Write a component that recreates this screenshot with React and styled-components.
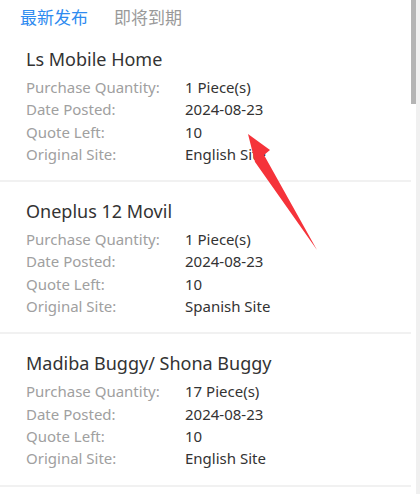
import styled, { createGlobalStyle } from 'styled-components';

const GlobalStyle = createGlobalStyle`
  html, body {
    margin: 0;
    padding: 0;
    background: #ffffff;
  }
  body {
    font-family: "Noto Sans", "Noto Sans CJK SC", sans-serif;
    overflow: hidden;
  }
`;

const Page = styled.div`
  width: 420px;
  height: 494px;
  overflow: hidden;
  background: #ffffff;
`;

const Tabs = styled.div`
  display: flex;
  gap: 26px;
  padding: 6px 20px 0;
  height: 24px;
`;

const Tab = styled.div`
  font-size: 17px;
  line-height: 24px;
  color: ${(p) => (p.active ? '#2e8bf0' : '#9a9a9a')};
`;

const List = styled.div`
  display: flex;
  flex-direction: column;
`;

const Card = styled.div`
  padding: 17px 26px 15px;
  border-bottom: 2px solid #f1f1f1;
`;

const Title = styled.div`
  font-size: 18px;
  line-height: 24px;
  color: #333333;
  margin-bottom: 5px;
`;

const Row = styled.div`
  display: grid;
  grid-template-columns: 159px 1fr;
  font-size: 15px;
  line-height: 22.3px;
`;

const Label = styled.span`
  color: #a0a0a0;
`;

const Value = styled.span`
  color: #333333;
`;

const Scrollbar = styled.div`
  position: fixed;
  top: 0;
  right: 0;
  width: 9px;
  height: 100%;
  background: linear-gradient(to right, #ffffff 0 5px, #f0f0f0 5px);
`;

const Thumb = styled.div`
  width: 5px;
  height: 104px;
  background: #b4b4b4;
`;

const Arrow = styled.svg`
  position: fixed;
  left: 0;
  top: 0;
  pointer-events: none;
`;

const items = [
  { title: 'Ls Mobile Home', qty: '1 Piece(s)', date: '2024-08-23', left: '10', site: 'English Site' },
  { title: 'Oneplus 12 Movil', qty: '1 Piece(s)', date: '2024-08-23', left: '10', site: 'Spanish Site' },
  { title: 'Madiba Buggy/ Shona Buggy', qty: '17 Piece(s)', date: '2024-08-23', left: '10', site: 'English Site' },
];

function App() {
  return (
    <Page>
      <GlobalStyle />
      <Tabs>
        <Tab active>最新发布</Tab>
        <Tab>即将到期</Tab>
      </Tabs>
      <List>
        {items.map((item) => (
          <Card key={item.title}>
            <Title>{item.title}</Title>
            <Row>
              <Label>Purchase Quantity:</Label>
              <Value>{item.qty}</Value>
            </Row>
            <Row>
              <Label>Date Posted:</Label>
              <Value>{item.date}</Value>
            </Row>
            <Row>
              <Label>Quote Left:</Label>
              <Value>{item.left}</Value>
            </Row>
            <Row>
              <Label>Original Site:</Label>
              <Value>{item.site}</Value>
            </Row>
          </Card>
        ))}
      </List>
      <Scrollbar>
        <Thumb />
      </Scrollbar>
      {/* red annotation arrow drawn over the list */}
      <Arrow width="420" height="494" viewBox="0 0 420 494">
        <polygon
          points="248,134 270,150 264,155 317,250 255,162"
          fill="#f5333a"
        />
      </Arrow>
    </Page>
  );
}

export default App;
